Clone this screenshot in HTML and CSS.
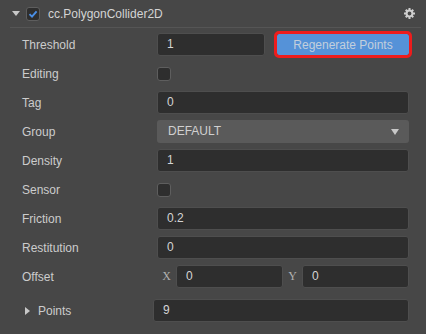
FILE: index.html
```html
<!DOCTYPE html>
<html lang="en">
<head>
    <meta charset="UTF-8">
    <meta name="viewport" content="width=device-width, initial-scale=1.0">
    <title>cc.PolygonCollider2D</title>
    <link rel="stylesheet" href="styles.css">
</head>
<body>
    <div class="header">
        <span class="fold down"></span>
        <span class="check on">
            <svg width="14" height="14" viewBox="0 0 14 14"><path d="M3.5 7.2 L6 9.7 L10.6 4.3" fill="none" stroke="#4a8fe6" stroke-width="1.9"/></svg>
        </span>
        <span class="title">cc.PolygonCollider2D</span>
        <svg class="gear" width="11" height="11" viewBox="0 0 12 12">
            <g fill="#cfcfcf">
                <rect x="4.9" y="0" width="2.2" height="3"/>
                <rect x="4.9" y="9" width="2.2" height="3"/>
                <rect x="0" y="4.9" width="3" height="2.2"/>
                <rect x="9" y="4.9" width="3" height="2.2"/>
                <rect x="4.9" y="0.2" width="2.2" height="3" transform="rotate(45 6 6)"/>
                <rect x="4.9" y="8.8" width="2.2" height="3" transform="rotate(45 6 6)"/>
                <rect x="4.9" y="0.2" width="2.2" height="3" transform="rotate(-45 6 6)"/>
                <rect x="4.9" y="8.8" width="2.2" height="3" transform="rotate(-45 6 6)"/>
            </g>
            <circle cx="6" cy="6" r="3.2" fill="none" stroke="#cfcfcf" stroke-width="2.2"/>
        </svg>
    </div>

    <div class="props">
        <div class="row">
            <span class="label">Threshold</span>
            <div class="field split">
                <div class="input">1</div>
                <button class="btn">Regenerate Points</button>
            </div>
        </div>
        <div class="row">
            <span class="label">Editing</span>
            <div class="field"><span class="check"></span></div>
        </div>
        <div class="row">
            <span class="label">Tag</span>
            <div class="field"><div class="input">0</div></div>
        </div>
        <div class="row">
            <span class="label">Group</span>
            <div class="field"><div class="select">DEFAULT<span class="caret"></span></div></div>
        </div>
        <div class="row">
            <span class="label">Density</span>
            <div class="field"><div class="input">1</div></div>
        </div>
        <div class="row">
            <span class="label">Sensor</span>
            <div class="field"><span class="check"></span></div>
        </div>
        <div class="row">
            <span class="label">Friction</span>
            <div class="field"><div class="input">0.2</div></div>
        </div>
        <div class="row">
            <span class="label">Restitution</span>
            <div class="field"><div class="input">0</div></div>
        </div>
        <div class="row">
            <span class="label">Offset</span>
            <div class="field vec">
                <span class="axis">X</span>
                <div class="input">0</div>
                <span class="axis">Y</span>
                <div class="input">0</div>
            </div>
        </div>
        <div class="row points">
            <span class="label"><span class="fold right"></span>Points</span>
            <div class="field"><div class="input">9</div></div>
        </div>
    </div>
</body>
</html>
```

FILE: styles.css
```css
body { margin: 0; background: #474747; color: #cccccc; font-family: "Liberation Sans", Arial, sans-serif; font-size: 12px; }

.header { display: flex; align-items: center; height: 27px; margin: 0 5px 0 10px; padding: 0 6px 0 2px; border-bottom: 1px solid #555; }
.header .check { margin-left: 6px; }
.title { margin-left: 8px; color: #d4d4d4; flex: 1; }
.gear { display: block; }

.fold { display: inline-block; width: 0; height: 0; border-style: solid; }
.fold.down { border-width: 5px 4px 0 4px; border-color: #c8c8c8 transparent transparent transparent; }
.fold.right { border-width: 4px 0 4px 5px; border-color: transparent transparent transparent #c8c8c8; margin: 0 8px 0 3px; }

.check { display: block; width: 12px; height: 12px; background: #2e2e2e; border: 1px solid #5e5e5e; border-radius: 3px; position: relative; }
.check svg { position: absolute; left: -1px; top: -1px; }

.props { padding: 2px 17px 0 22px; }
.row { display: flex; align-items: center; height: 29px; }
.label { width: 135px; flex: none; display: flex; align-items: center; }
.field { flex: 1; display: flex; align-items: center; }

.input { flex: 1; height: 21px; line-height: 21px; padding: 0 9px; background: #2e2e2e; border: 1px solid #4e4e4e; border-radius: 3px; color: #d4d4d4; }

.split { gap: 12px; }
.split .input { flex: none; width: 88px; }
.btn { flex: 1; height: 21px; padding: 0; border: none; border-radius: 2px; background: #5592d8; color: #c3cfdc; font: inherit; font-size: 12px; outline: 3px solid #ee1c1c; }

.select { flex: 1; height: 23px; line-height: 23px; padding: 0 10px 0 11px; background: #5a5a5a; border-radius: 3px; color: #d0d0d0; display: flex; justify-content: space-between; align-items: center; }
.caret { width: 0; height: 0; border-style: solid; border-width: 6px 4px 0 4px; border-color: #c8c8c8 transparent transparent transparent; }

.vec { display: grid; grid-template-columns: 19px 1fr 19px 1fr; align-items: center; }
.axis { text-align: center; font-family: "Liberation Serif", "Times New Roman", serif; color: #b0b0b0; }

.points { margin-top: 5px; }
.points .label { width: 131px; }
```
